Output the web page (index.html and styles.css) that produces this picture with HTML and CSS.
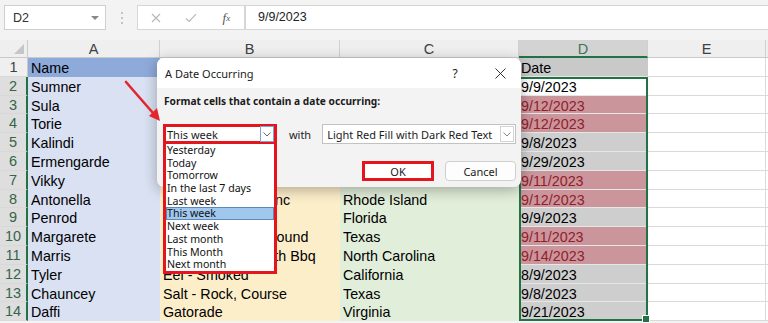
FILE: index.html
```html
<!DOCTYPE html>
<html lang="en">
<head>
  <meta charset="UTF-8">
  <title>A Date Occurring</title>
  <link rel="stylesheet" href="styles.css">
</head>
<body>
  <div class="window">
    <!-- formula bar -->
    <div class="formula-bar">
      <div class="name-box">D2<span class="caret"></span></div>
      <div class="grip"><span></span><span></span><span></span></div>
      <div class="fx-buttons">
        <span class="fx-btn">
          <svg width="10" height="10" viewBox="0 0 10 10"><path d="M1 1L9 9M9 1L1 9" stroke="#b8b8b8" stroke-width="1.2"/></svg>
        </span>
        <span class="fx-btn">
          <svg width="12" height="10" viewBox="0 0 12 10"><path d="M1 5.5L4.2 8.5L11 1.2" fill="none" stroke="#b8b8b8" stroke-width="1.2"/></svg>
        </span>
        <span class="fx-btn fx">f<sub>x</sub></span>
      </div>
      <div class="formula-input">9/9/2023</div>
    </div>

    <!-- worksheet -->
    <div class="sheet">
      <div class="corner"><span></span></div>
      <div class="col-head">A</div>
      <div class="col-head">B</div>
      <div class="col-head">C</div>
      <div class="col-head on">D</div>
      <div class="col-head">E</div>
      <div class="col-head"></div>

      <div class="row-head">1</div>
      <div class="cell a title">Name</div>
      <div class="cell b">Product</div>
      <div class="cell c">State</div>
      <div class="cell d head">Date</div>
      <div class="cell e"></div>
      <div class="cell e"></div>

      <div class="row-head on">2</div>
      <div class="cell a">Sumner</div>
      <div class="cell b">Bread - Rye</div>
      <div class="cell c">Ohio</div>
      <div class="cell d active">9/9/2023</div>
      <div class="cell e"></div>
      <div class="cell e"></div>

      <div class="row-head on">3</div>
      <div class="cell a">Sula</div>
      <div class="cell b">Lettuce - Frisee</div>
      <div class="cell c">Texas</div>
      <div class="cell d red">9/12/2023</div>
      <div class="cell e"></div>
      <div class="cell e"></div>

      <div class="row-head on">4</div>
      <div class="cell a">Torie</div>
      <div class="cell b">Coffee - Decaf</div>
      <div class="cell c">Georgia</div>
      <div class="cell d red">9/12/2023</div>
      <div class="cell e"></div>
      <div class="cell e"></div>

      <div class="row-head on">5</div>
      <div class="cell a">Kalindi</div>
      <div class="cell b">Beer - Pale Ale</div>
      <div class="cell c">New York</div>
      <div class="cell d grey">9/8/2023</div>
      <div class="cell e"></div>
      <div class="cell e"></div>

      <div class="row-head on">6</div>
      <div class="cell a">Ermengarde</div>
      <div class="cell b">Cheese - Brie</div>
      <div class="cell c">Florida</div>
      <div class="cell d grey">9/29/2023</div>
      <div class="cell e"></div>
      <div class="cell e"></div>

      <div class="row-head on">7</div>
      <div class="cell a">Vikky</div>
      <div class="cell b">Juice - Apple</div>
      <div class="cell c">Arizona</div>
      <div class="cell d red">9/11/2023</div>
      <div class="cell e"></div>
      <div class="cell e"></div>

      <div class="row-head on">8</div>
      <div class="cell a">Antonella</div>
      <div class="cell b">Tea - Herbal Mix Inc</div>
      <div class="cell c">Rhode Island</div>
      <div class="cell d red">9/12/2023</div>
      <div class="cell e"></div>
      <div class="cell e"></div>

      <div class="row-head on">9</div>
      <div class="cell a">Penrod</div>
      <div class="cell b">Beer - Lager</div>
      <div class="cell c">Florida</div>
      <div class="cell d grey">9/9/2023</div>
      <div class="cell e"></div>
      <div class="cell e"></div>

      <div class="row-head on">10</div>
      <div class="cell a">Margarete</div>
      <div class="cell b">Pepper - Black Ground</div>
      <div class="cell c">Texas</div>
      <div class="cell d red">9/11/2023</div>
      <div class="cell e"></div>
      <div class="cell e"></div>

      <div class="row-head on">11</div>
      <div class="cell a">Marris</div>
      <div class="cell b">Chips Potato South Bbq</div>
      <div class="cell c">North Carolina</div>
      <div class="cell d red">9/14/2023</div>
      <div class="cell e"></div>
      <div class="cell e"></div>

      <div class="row-head on">12</div>
      <div class="cell a">Tyler</div>
      <div class="cell b">Eel - Smoked</div>
      <div class="cell c">California</div>
      <div class="cell d grey">8/9/2023</div>
      <div class="cell e"></div>
      <div class="cell e"></div>

      <div class="row-head on">13</div>
      <div class="cell a">Chauncey</div>
      <div class="cell b">Salt - Rock, Course</div>
      <div class="cell c">Texas</div>
      <div class="cell d grey">9/8/2023</div>
      <div class="cell e"></div>
      <div class="cell e"></div>

      <div class="row-head on">14</div>
      <div class="cell a">Daffi</div>
      <div class="cell b">Gatorade</div>
      <div class="cell c">Virginia</div>
      <div class="cell d grey">9/21/2023</div>
      <div class="cell e"></div>
      <div class="cell e"></div>

      <div class="selection"></div>
    </div>

    <!-- A Date Occurring dialog -->
    <div class="dialog">
      <div class="dialog-title">
        <span class="caption">A Date Occurring</span>
        <span class="help">?</span>
        <span class="close">
          <svg width="11" height="11" viewBox="0 0 11 11"><path d="M0.5 0.5L10.5 10.5M10.5 0.5L0.5 10.5" stroke="#333" stroke-width="1"/></svg>
        </span>
      </div>
      <div class="dialog-body">
        <div class="label">Format cells that contain a date occurring:</div>
        <div class="pick-row">
          <div class="combo period">
            <span class="combo-text">This week</span>
            <span class="combo-btn focus">
              <svg width="8" height="5" viewBox="0 0 8 5"><path d="M0.5 0.5L4 4L7.5 0.5" fill="none" stroke="#666" stroke-width="1"/></svg>
            </span>
            <ul class="options">
              <li>Yesterday</li>
              <li>Today</li>
              <li>Tomorrow</li>
              <li>In the last 7 days</li>
              <li>Last week</li>
              <li class="picked">This week</li>
              <li>Next week</li>
              <li>Last month</li>
              <li>This Month</li>
              <li>Next month</li>
            </ul>
          </div>
          <span class="with">with</span>
          <div class="combo format">
            <span class="combo-text">Light Red Fill with Dark Red Text</span>
            <span class="combo-btn">
              <svg width="8" height="5" viewBox="0 0 8 5"><path d="M0.5 0.5L4 4L7.5 0.5" fill="none" stroke="#888" stroke-width="1"/></svg>
            </span>
          </div>
        </div>
        <div class="button-row">
          <button class="btn ok">OK</button>
          <button class="btn">Cancel</button>
        </div>
      </div>
    </div>

    <!-- callout arrow -->
    <svg class="arrow" width="768" height="323" viewBox="0 0 768 323">
      <line x1="126" y1="82" x2="153" y2="113" stroke="#e3262c" stroke-width="2.6" stroke-linecap="round"/>
      <polygon points="160,121 149,116 157,108" fill="#e3262c"/>
    </svg>
  </div>
</body>
</html>
```

FILE: styles.css
```css
* {
  box-sizing: border-box;
}

body {
  margin: 0;
  background: #f3f3f3;
  font-family: 'Liberation Sans', Arial, sans-serif;
}

.window {
  position: relative;
  width: 768px;
  height: 323px;
  overflow: hidden;
}

/* formula bar */
.formula-bar {
  display: flex;
  align-items: flex-start;
  height: 40px;
  padding: 5px 0 0 4px;
  background: #f3f3f3;
}

.name-box {
  display: flex;
  align-items: center;
  justify-content: space-between;
  width: 102px;
  height: 25px;
  padding: 0 6px 0 8px;
  background: #fff;
  border: 1px solid #cfcfcf;
  font-size: 12.5px;
  color: #333;
}

.caret {
  width: 0;
  height: 0;
  border-left: 4px solid transparent;
  border-right: 4px solid transparent;
  border-top: 4px solid #888;
}

.grip {
  display: flex;
  flex-direction: column;
  align-items: center;
  justify-content: center;
  gap: 3px;
  width: 31px;
  height: 25px;
}

.grip span {
  width: 2px;
  height: 2px;
  background: #c4c4c4;
}

.fx-buttons {
  display: flex;
  width: 108px;
  height: 25px;
  background: #fff;
  border: 1px solid #d6d6d6;
}

.fx-btn {
  display: flex;
  align-items: center;
  justify-content: center;
  width: 36px;
  height: 23px;
}

.fx {
  font-family: 'Liberation Serif', serif;
  font-style: italic;
  font-size: 13px;
  color: #555;
}

.fx sub {
  font-size: 9px;
  vertical-align: -2px;
}

.formula-input {
  flex: 1;
  height: 25px;
  padding-left: 12px;
  background: #fff;
  border: 1px solid #d6d6d6;
  border-right: none;
  font-size: 12.5px;
  line-height: 23px;
  color: #222;
}

/* worksheet */
.sheet {
  position: relative;
  display: grid;
  grid-template-columns: 28px 132px 180px 179px 129px 118px 1fr;
  grid-template-rows: 18px repeat(14, 18.8px);
  background: #fff;
}

.corner {
  display: flex;
  align-items: flex-end;
  justify-content: flex-end;
  padding: 0 3px 3px 0;
  background: #efefef;
  border-right: 1px solid #c9c9c9;
  border-bottom: 1px solid #c9c9c9;
}

.corner span {
  width: 0;
  height: 0;
  border-left: 10px solid transparent;
  border-bottom: 10px solid #c6c6c6;
}

.col-head {
  background: #efefef;
  border-right: 1px solid #d0d0d0;
  border-bottom: 1px solid #c9c9c9;
  text-align: center;
  font-size: 14.5px;
  line-height: 18px;
  color: #404040;
}

.col-head.on {
  background: #d3d3d3;
  color: #3f7455;
  border-bottom: 2px solid #217346;
}

.row-head {
  background: #efefef;
  border-right: 1px solid #c9c9c9;
  border-bottom: 1px solid #d8d8d8;
  text-align: center;
  font-size: 14.5px;
  line-height: 18.8px;
  color: #404040;
}

.row-head.on {
  background: #dedede;
  color: #33654a;
  border-right: 2px solid #217346;
}

.cell {
  padding: 1px 0 0 3px;
  font-size: 14.3px;
  line-height: 18px;
  color: #000;
  white-space: nowrap;
  overflow: hidden;
}

.a { background: #d9e1f2; }
.a.title { background: #8eaadb; }
.b { background: #fdeeca; }
.c { background: #e1eed9; }

.d {
  padding-left: 2px;
  border-bottom: 1px solid #e6e6e6;
}

.d.head { background: #c9c9c9; }
.d.active { background: #fff; }
.d.grey { background: #cecece; }
.d.red { background: #cb959c; color: #92202b; }

.e {
  background: #fff;
  border-right: 1px solid #dadada;
  border-bottom: 1px solid #dadada;
}

/* selected range D2:D14, drawn over the cells */
.selection {
  position: absolute;
  inset: 0;
  grid-column: 5 / 6;
  grid-row: 3 / 16;
  border: 2px solid #217346;
  pointer-events: none;
}

.selection::after {
  content: '';
  position: absolute;
  right: -4px;
  bottom: -4px;
  width: 6px;
  height: 6px;
  background: #217346;
  border: 1px solid #fff;
}

/* dialog */
.dialog {
  position: absolute;
  left: 157px;
  top: 58px;
  width: 364px;
  height: 129px;
  background: #f3f3f3;
  border-radius: 7px;
  box-shadow: 0 3px 14px rgba(0, 0, 0, 0.3);
  font-family: 'Noto Sans', sans-serif;
  font-size: 11px;
  color: #1b1b1b;
}

.dialog-title {
  display: flex;
  align-items: center;
  height: 30px;
  padding-left: 8px;
  background: #fff;
  border-radius: 7px 7px 0 0;
}

.caption {
  flex: 1;
}

.help {
  width: 20px;
  margin-right: 14px;
  text-align: center;
  font-size: 12px;
}

.close {
  display: flex;
  justify-content: center;
  width: 42px;
}

.dialog-body {
  display: flex;
  flex-direction: column;
  padding: 6px 5px 6px 6px;
}

.label {
  margin-left: 1px;
  font-size: 10.2px;
  font-weight: bold;
  line-height: 14px;
}

.pick-row {
  display: flex;
  align-items: center;
  height: 20px;
  margin-top: 16px;
}

.combo {
  position: relative;
  display: flex;
  align-items: center;
  height: 20px;
  background: #fff;
}

.combo-text {
  flex: 1;
  white-space: nowrap;
}

.combo-btn {
  display: flex;
  align-items: center;
  justify-content: center;
  width: 14px;
  height: 16px;
  border: 1px solid #d4d4d4;
}

.combo-btn.focus {
  border-color: #7aa7d8;
}

.period {
  width: 114px;
  padding: 0 0 0 1px;
  border: 3px solid #e3161d;
}

.with {
  margin: 0 11px 0 12px;
}

.format {
  width: 194px;
  padding: 0 1px 0 4px;
  border: 1px solid #c2c2c2;
}

.options {
  position: absolute;
  left: -3px;
  top: 17px;
  width: 114px;
  margin: 0;
  padding: 0;
  list-style: none;
  background: #fff;
  border: 3px solid #e3161d;
  border-top: none;
  font-size: 10.6px;
  color: #111;
}

.options li {
  height: 12.7px;
  padding-left: 1px;
  line-height: 12.7px;
  white-space: nowrap;
}

.options .picked {
  background: #a0c8ee;
  box-shadow: inset 0 0 0 1px #5d88b8;
}

.button-row {
  display: flex;
  justify-content: flex-end;
  gap: 11px;
  margin-top: 17px;
}

.btn {
  width: 71px;
  height: 20px;
  padding: 0;
  background: #fdfdfd;
  border: 1px solid #cfcfcf;
  border-radius: 4px;
  font-family: 'Noto Sans', sans-serif;
  font-size: 11px;
  color: #1b1b1b;
}

.btn.ok {
  width: 72px;
  background: #fff;
  border: 3px solid #e3161d;
  border-radius: 0;
}

.arrow {
  position: absolute;
  left: 0;
  top: 0;
  pointer-events: none;
}
```
